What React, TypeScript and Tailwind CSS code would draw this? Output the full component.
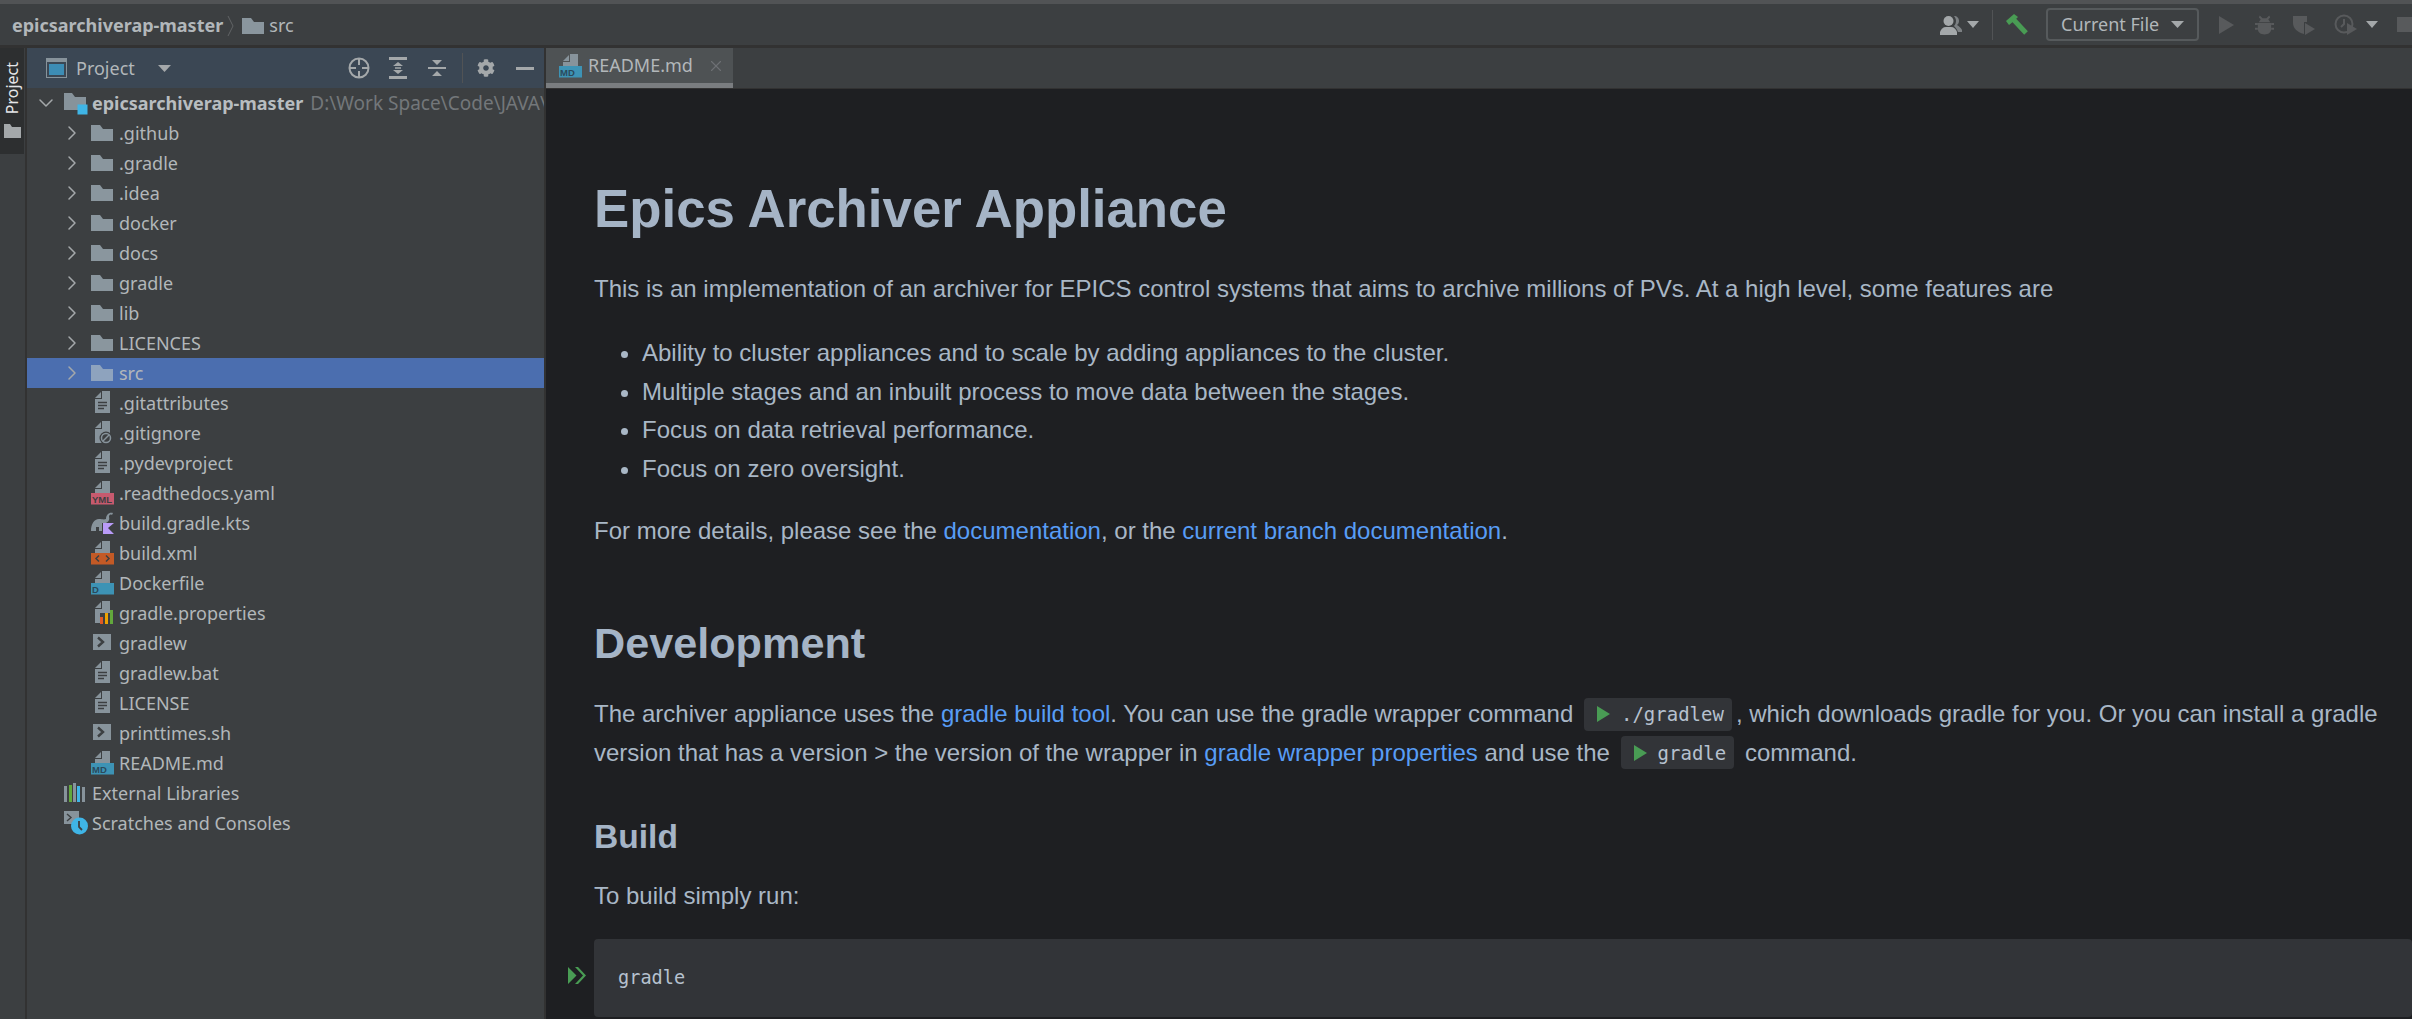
import React from 'react';
import { ChevronDown, ChevronRight, X } from 'lucide-react';
import { FaCog } from 'react-icons/fa';

const PANEL = '#3c3f41';
const ICON = '#87939b';
const GLYPH = '#a4a8aa';

function Folder({ color = '#8a969e' }: { color?: string }) {
  return (
    <svg width="22" height="16" viewBox="0 0 22 16">
      <path d="M0 0h9l3 4h10v12H0z" fill={color} />
    </svg>
  );
}

function Page() {
  return (
    <>
      <path d="M11 0h8v22H4V8h7z" fill={ICON} />
      <path d="M4 7l6-6v6z" fill={ICON} />
    </>
  );
}

function TextFile() {
  return (
    <svg width="23" height="24" viewBox="0 0 23 24">
      <Page />
      <path d="M7 11.5h9M7 14.5h9M7 17.5h6" stroke={PANEL} strokeWidth="1.4" />
    </svg>
  );
}

function IgnoreFile() {
  return (
    <svg width="23" height="24" viewBox="0 0 23 24">
      <Page />
      <circle cx="15" cy="17" r="6.5" fill={PANEL} />
      <circle cx="15" cy="17" r="4.5" fill="none" stroke={ICON} strokeWidth="1.5" />
      <path d="M12 20l6-6" stroke={ICON} strokeWidth="1.5" />
    </svg>
  );
}

function BadgeFile({ bg, fg, label }: { bg: string; fg: string; label: string }) {
  return (
    <svg width="23" height="24" viewBox="0 0 23 24">
      <path d="M11 0h8v12H4V8h7z" fill={ICON} />
      <path d="M4 7l6-6v6z" fill={ICON} />
      <rect x="0" y="12" width="23" height="11.5" fill={bg} />
      <text x="1" y="22" fontSize="9.5" fontFamily="Liberation Sans" fontWeight="700" fill={fg}>
        {label}
      </text>
    </svg>
  );
}

function XmlFile() {
  return (
    <svg width="23" height="24" viewBox="0 0 23 24">
      <path d="M11 0h8v12H4V8h7z" fill={ICON} />
      <path d="M4 7l6-6v6z" fill={ICON} />
      <rect x="0" y="12" width="23" height="11.5" fill="#c35a26" />
      <path d="M8 14.5l-3 3 3 3M15 14.5l3 3-3 3" stroke={PANEL} strokeWidth="1.5" fill="none" />
    </svg>
  );
}

function GradleKts() {
  return (
    <svg width="23" height="24" viewBox="0 0 23 24">
      <path d="M0 20c0-7 3-12 8-12 3 0 5 1 7 0 0-4 3-7 7-6l-1 2c-2-1-3 0-3 2 1 3-1 5-3 6h-4v8H8v-4H5v4H1z" fill={ICON} />
      <path d="M12 12h11l-6 5 6 6H12z" fill="#b99bf8" />
    </svg>
  );
}

function PropsFile() {
  return (
    <svg width="23" height="24" viewBox="0 0 23 24">
      <Page />
      <rect x="9" y="12" width="14" height="11" fill={PANEL} />
      <rect x="9" y="16" width="3" height="7" fill="#e05a24" />
      <rect x="14" y="12" width="3" height="11" fill="#eda200" />
      <rect x="19" y="9" width="3" height="14" fill="#62a83c" />
    </svg>
  );
}

function ShellFile() {
  return (
    <svg width="23" height="24" viewBox="0 0 23 24">
      <rect x="2" y="3" width="18" height="16" fill={ICON} />
      <path d="M7 6.5l5 4.5-5 4.5" stroke={PANEL} strokeWidth="2.4" fill="none" />
    </svg>
  );
}

function ModuleIcon() {
  return (
    <svg width="24" height="22" viewBox="0 0 24 22">
      <path d="M0 0h8l3 4h11v13H0z" fill={ICON} />
      <rect x="13.5" y="11.5" width="10" height="10" fill="#3fb5e6" />
    </svg>
  );
}

function LibIcon() {
  return (
    <svg width="22" height="20" viewBox="0 0 22 20">
      <rect x="0" y="3" width="3" height="16" fill={ICON} />
      <rect x="5" y="2" width="3" height="17" fill="#62a83c" />
      <rect x="9" y="0" width="3" height="19" fill={ICON} />
      <rect x="13" y="3" width="3" height="16" fill="#3fb5e6" />
      <rect x="18" y="4" width="3" height="15" fill={ICON} />
    </svg>
  );
}

function ScratchIcon() {
  return (
    <svg width="24" height="24" viewBox="0 0 24 24">
      <rect x="0" y="0" width="15" height="13" fill={ICON} />
      <path d="M3 3l4 3.5-4 3.5" stroke={PANEL} strokeWidth="1.4" fill="none" />
      <circle cx="15.5" cy="15" r="8.5" fill="#3fb5e6" />
      <path d="M15 10v6l3 3" stroke={PANEL} strokeWidth="1.8" fill="none" />
    </svg>
  );
}

function Caret({ size = 13, color = GLYPH }: { size?: number; color?: string }) {
  return (
    <svg width={size} height="7" viewBox="0 0 13 7" preserveAspectRatio="none">
      <path d="M0 0h13L6.5 7z" fill={color} />
    </svg>
  );
}

const folders = ['.github', '.gradle', '.idea', 'docker', 'docs', 'gradle', 'lib', 'LICENCES', 'src'];

const files: { name: string; icon: React.ReactNode }[] = [
  { name: '.gitattributes', icon: <TextFile /> },
  { name: '.gitignore', icon: <IgnoreFile /> },
  { name: '.pydevproject', icon: <TextFile /> },
  { name: '.readthedocs.yaml', icon: <BadgeFile bg="#c75a6e" fg="#3c3f41" label="YML" /> },
  { name: 'build.gradle.kts', icon: <GradleKts /> },
  { name: 'build.xml', icon: <XmlFile /> },
  { name: 'Dockerfile', icon: <BadgeFile bg="#3d93b5" fg="#2b4a5c" label="D" /> },
  { name: 'gradle.properties', icon: <PropsFile /> },
  { name: 'gradlew', icon: <ShellFile /> },
  { name: 'gradlew.bat', icon: <TextFile /> },
  { name: 'LICENSE', icon: <TextFile /> },
  { name: 'printtimes.sh', icon: <ShellFile /> },
  { name: 'README.md', icon: <BadgeFile bg="#3d93b5" fg="#2b4a5c" label="MD" /> },
];

function Row({ children, selected }: { children: React.ReactNode; selected?: boolean }) {
  return (
    <div className={`flex h-[30px] items-center overflow-hidden whitespace-nowrap ${selected ? 'bg-[#4b6eaf]' : ''}`}>
      {children}
    </div>
  );
}

function ProjectTree() {
  return (
    <div className="flex-1 overflow-hidden text-[18px] text-[#b2b7ba]">
      <Row>
        <ChevronDown className="ml-[7px] h-[24px] w-[24px] shrink-0 text-[#a4a8aa]" strokeWidth={1.5} />
        <div className="ml-[6px] w-[28px] shrink-0 pt-[2px]">
          <ModuleIcon />
        </div>
        <span className="pt-[1px] font-bold text-[#b8bdc0]">epicsarchiverap-master</span>
        <span className="ml-[7px] pt-[1px] text-[19px] text-[#73777a]">D:\Work Space\Code\JAVA\</span>
      </Row>
      {folders.map((name) => (
        <Row key={name} selected={name === 'src'}>
          <ChevronRight className="ml-[33px] h-[24px] w-[24px] shrink-0 text-[#a4a8aa]" strokeWidth={1.5} />
          <div className="ml-[7px] w-[28px] shrink-0">
            <Folder color={name === 'src' ? '#8ea3be' : '#8a969e'} />
          </div>
          <span className="pt-[1px]">{name}</span>
        </Row>
      ))}
      {files.map((file) => (
        <Row key={file.name}>
          <div className="ml-[64px] flex w-[28px] shrink-0 items-center">{file.icon}</div>
          <span className="pt-[1px]">{file.name}</span>
        </Row>
      ))}
      <Row>
        <div className="ml-[37px] w-[28px] shrink-0">
          <LibIcon />
        </div>
        <span className="pt-[1px]">External Libraries</span>
      </Row>
      <Row>
        <div className="ml-[37px] w-[28px] shrink-0">
          <ScratchIcon />
        </div>
        <span className="pt-[1px]">Scratches and Consoles</span>
      </Row>
    </div>
  );
}

function ToolbarRight() {
  return (
    <div className="flex items-center text-[#585a5c]">
      <svg width="22" height="20" viewBox="0 0 22 20">
        <path d="M14 1c3 0 5 2 5 5 0 2-1 3-2 4 2 1 4 3 5 5v2h-4c-1-3-3-5-4-6 1-1 2-3 2-5s-1-4-2-5z" fill="#7c8083" />
        <circle cx="8.5" cy="6" r="5" fill="#a4a8aa" />
        <path d="M0 20v-3c1-3 3-5 6-5h5c3 0 5 2 6 5v3z" fill="#a4a8aa" />
      </svg>
      <div className="ml-[5px]">
        <Caret size={12} />
      </div>
      <div className="ml-[13px] h-[30px] w-[1px] bg-[#515355]" />
      <svg width="22" height="22" viewBox="0 0 22 22" className="ml-[13px]">
        <path d="M0 7l8-7 4 3-3 3-1 1-5 4z" fill="#499c54" />
        <path d="M7 5l13 14" stroke="#499c54" strokeWidth="5" />
      </svg>
      <div className="ml-[18px] flex h-[33px] w-[153px] items-center justify-between rounded-[4px] border-2 border-[#565a5c] pl-[13px] pr-[13px] text-[18px] text-[#b2b7ba]">
        <span>Current File</span>
        <Caret />
      </div>
      <svg width="16" height="18" viewBox="0 0 16 18" className="ml-[20px]">
        <path d="M0 0l15 9-15 9z" fill="currentColor" />
      </svg>
      <svg width="19" height="22" viewBox="0 0 20 22" className="ml-[20px]">
        <path d="M5 1l3 3h4l3-3 1 2-2 2 2 3H4l2-3-2-2zM3 9h14v6c0 4-3 6-7 6s-7-2-7-6z" fill="currentColor" />
        <path d="M0 10h3M0 15h3M17 10h3M17 15h3" stroke="currentColor" strokeWidth="2" />
      </svg>
      <svg width="24" height="22" viewBox="0 0 24 22" className="ml-[18px]">
        <path d="M1 2h14v6h-3v12C5 18 1 14 1 9z" fill="currentColor" />
        <path d="M13 9l10 6-10 6z" fill="currentColor" />
      </svg>
      <svg width="24" height="22" viewBox="0 0 24 22" className="ml-[18px]">
        <circle cx="10" cy="10" r="8.5" fill="none" stroke="currentColor" strokeWidth="2" />
        <path d="M10 5v5l-3 3" fill="none" stroke="currentColor" strokeWidth="2" />
        <path d="M13 9l10 6-10 6z" fill="currentColor" />
      </svg>
      <div className="ml-[8px]">
        <Caret size={12} />
      </div>
      <div className="ml-[19px] h-[15px] w-[15px] bg-[#585a5c]" />
    </div>
  );
}

function InlineCode({ children }: { children: string }) {
  return (
    <span className="mx-[4px] inline-flex h-[33px] items-center rounded-[4px] bg-[#323438] pl-[13px] pr-[8px] align-baseline font-['DejaVu_Sans_Mono'] text-[19px] text-[#b6c1cf]">
      <svg width="13" height="16" viewBox="0 0 13 16" className="mr-[11px]">
        <path d="M0 0l13 8-13 8z" fill="#499c54" />
      </svg>
      {children}
    </span>
  );
}

function Link({ children }: { children: string }) {
  return <span className="text-[#589df6]">{children}</span>;
}

function Readme() {
  return (
    <div className="flex-1 overflow-hidden bg-[#1e1f22] pl-[48px] pt-[90px] font-['Liberation_Sans'] text-[24px] leading-[38.4px] text-[#a9b7c6]">
      <div className="w-[1900px]">
        <h1 className="text-[52.8px] font-bold leading-[60px] text-[#a5b4c6]">Epics Archiver Appliance</h1>
        <p className="mt-[31px] whitespace-nowrap">
          This is an implementation of an archiver for EPICS control systems that aims to archive millions of PVs. At a high level, some features are
        </p>
        <ul className="mt-[26px] list-disc pl-[48px]">
          <li>Ability to cluster appliances and to scale by adding appliances to the cluster.</li>
          <li>Multiple stages and an inbuilt process to move data between the stages.</li>
          <li>Focus on data retrieval performance.</li>
          <li>Focus on zero oversight.</li>
        </ul>
        <p className="mt-[24px]">
          For more details, please see the <Link>documentation</Link>, or the <Link>current branch documentation</Link>.
        </p>
        <h2 className="mt-[68px] text-[43.2px] font-bold leading-[50px] text-[#a5b4c6]">Development</h2>
        <p className="mt-[27px] whitespace-nowrap">
          The archiver appliance uses the <Link>gradle build tool</Link>. You can use the gradle wrapper command{' '}
          <InlineCode>./gradlew</InlineCode>, which downloads gradle for you. Or you can install a gradle
          <br />
          version that has a version &gt; the version of the wrapper in <Link>gradle wrapper properties</Link> and use the{' '}
          <InlineCode>gradle</InlineCode> command.
        </p>
        <h3 className="mt-[45px] text-[33.6px] font-bold leading-[40px] text-[#a5b4c6]">Build</h3>
        <p className="mt-[20px]">To build simply run:</p>
      </div>
      <div className="relative mt-[23px] flex h-[78px] items-center rounded-[4px] bg-[#323438] pl-[24px] pt-[2px] font-['DejaVu_Sans_Mono'] text-[18.6px] text-[#b6c1cf]">
        <svg width="18" height="17" viewBox="0 0 18 17" className="absolute left-[-26px] top-[28px]">
          <path d="M0 0l8.5 8.5L0 17zM7 0h3l8 8.5-8 8.5H7l8-8.5z" fill="#499c54" />
        </svg>
        gradle
      </div>
    </div>
  );
}

export default function App() {
  return (
    <div className="flex h-[1019px] w-[2412px] flex-col overflow-hidden bg-[#3c3f41] font-['Noto_Sans']">
      <div className="flex h-[48px] shrink-0 items-center justify-between border-t-[4px] border-b-[3px] border-t-[#515355] border-b-[#323232] pl-[12px] text-[18px] text-[#b2b7ba]">
        <div className="flex items-center pt-[2px]">
          <span className="font-bold">epicsarchiverap-master</span>
          <svg width="8" height="24" viewBox="0 0 8 24" className="ml-[4px] mr-[7px]">
            <path d="M1 2l5 10-5 10" fill="none" stroke="#616365" strokeWidth="1" />
          </svg>
          <Folder />
          <span className="ml-[5px]">src</span>
        </div>
        <ToolbarRight />
      </div>
      <div className="flex min-h-0 flex-1">
        <div className="flex w-[27px] shrink-0 flex-col border-r-[2px] border-[#323232]">
          <div className="flex h-[106px] w-[24px] flex-col items-center bg-[#2d2f30] pt-[14px]">
            <span className="rotate-180 text-[16px] leading-[20px] text-[#e4e6e8] [writing-mode:vertical-rl]">Project</span>
            <div className="mt-[10px]">
              <svg width="17" height="14" viewBox="0 0 17 14">
                <path d="M0 0h6l2 3h9v11H0z" fill="#a4a8aa" />
              </svg>
            </div>
          </div>
        </div>
        <div className="flex w-[519px] shrink-0 flex-col border-r-[2px] border-[#323232]">
          <div className="flex h-[40px] shrink-0 items-center justify-between bg-[#3b4754] pl-[19px] pr-[10px] text-[18px] text-[#b2b7ba]">
            <div className="flex items-center">
              <svg width="21" height="20" viewBox="0 0 21 20">
                <rect x="0.5" y="0.5" width="20" height="19" fill="none" stroke={ICON} />
                <rect x="0" y="0" width="21" height="4" fill={ICON} />
                <rect x="3" y="6" width="15" height="11" fill="#3d8db5" />
              </svg>
              <span className="ml-[9px]">Project</span>
              <div className="ml-[23px]">
                <Caret />
              </div>
            </div>
            <div className="flex items-center text-[#a4a8aa]">
              <svg width="22" height="22" viewBox="0 0 22 22">
                <circle cx="11" cy="11" r="9.5" fill="none" stroke="currentColor" strokeWidth="2" />
                <path d="M11 1v7M11 14v7M1 11h7M14 11h7" stroke="currentColor" strokeWidth="2" />
              </svg>
              <svg width="18" height="22" viewBox="0 0 18 22" className="ml-[19px]">
                <path d="M0 1.5h18M0 20.5h18" stroke="currentColor" strokeWidth="3" />
                <path d="M9 5l5 4H4zM9 17l-5-4h10z" fill="currentColor" />
                <path d="M6 11h6" stroke="currentColor" strokeWidth="1.5" />
              </svg>
              <svg width="18" height="20" viewBox="0 0 18 20" className="ml-[21px]">
                <path d="M0 10h18" stroke="currentColor" strokeWidth="2" />
                <path d="M9 7L4 2h10zM9 13l5 5H4z" fill="currentColor" />
              </svg>
              <div className="ml-[16px] h-[30px] w-[1px] bg-[#515355]" />
              <FaCog className="ml-[14px] h-[18px] w-[18px]" />
              <div className="ml-[21px] h-[3px] w-[18px] bg-[#a4a8aa]" />
            </div>
          </div>
          <ProjectTree />
        </div>
        <div className="flex min-w-0 flex-1 flex-col">
          <div className="flex h-[41px] shrink-0 items-stretch border-b-[1px] border-[#323232] bg-[#3c3f41] text-[18px] text-[#b2b7ba]">
            <div className="flex w-[187px] items-center border-b-[5px] border-[#7a7d80] bg-[#4e5254] pl-[13px]">
              <BadgeFile bg="#3d93b5" fg="#2b4a5c" label="MD" />
              <span className="ml-[6px]">README.md</span>
              <X className="ml-[14px] h-[18px] w-[18px] text-[#6e7174]" strokeWidth={1.5} />
            </div>
          </div>
          <Readme />
        </div>
      </div>
    </div>
  );
}
